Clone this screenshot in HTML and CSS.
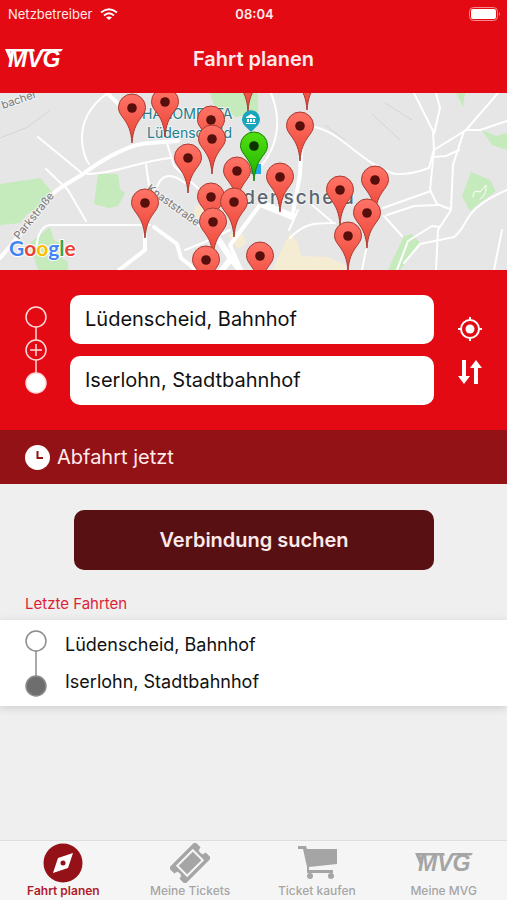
FILE: index.html
```html
<!DOCTYPE html>
<html lang="de">
<head>
<meta charset="utf-8">
<meta name="viewport" content="width=device-width, initial-scale=1">
<title>Fahrt planen</title>
<link rel="stylesheet" href="styles.css">
</head>
<body>
<svg class="defs" width="0" height="0" aria-hidden="true">
  <defs>
    <linearGradient id="red" x1="0" y1="0" x2="0" y2="1"><stop offset="0" stop-color="#ff7467"/><stop offset="1" stop-color="#ea4335"/></linearGradient>
    <linearGradient id="green" x1="0" y1="0" x2="0" y2="1"><stop offset="0" stop-color="#50e010"/><stop offset="1" stop-color="#1fae00"/></linearGradient>
    <path id="drop" d="M0 35C-1 22-4 17-8 11C-11 7-13.500 4-13.500-.5A13.500 13.500 0 0 1 13.500-.5C13.500 4 11 7 8 11C4 17 1 22 0 35Z"/>
    <g id="pin"><use href="#drop" fill="url(#red)" stroke="#a93a31"/><circle r="4.800" fill="#560f0a"/></g>
    <g id="pin-start"><use href="#drop" fill="url(#green)" stroke="#168000"/><circle r="4.800" fill="#0a3300"/></g>
    <symbol id="mvg" viewBox="0 0 60 20">
      <path d="M1 0H30L31 2.500H6L9 8L7 14ZM38 0H59L57 2.500H37Z" fill="currentColor"/>
      <text x="4" y="18" class="logo-text">MVG</text>
    </symbol>
  </defs>
</svg>
<div class="app">
  <header class="top">
    <div class="status">
      <span class="carrier">Netzbetreiber
        <svg width="18" height="13" viewBox="0 0 18 13" fill="none" stroke="#fff" stroke-width="2"><path d="M1 4.500Q9-2 17 4.500M4 7.500Q9 3 14 7.500"/><path d="M9 12L6 9.500Q9 7.500 12 9.500Z" fill="#fff" stroke="none"/></svg>
      </span>
      <strong class="time">08:04</strong>
      <svg class="battery" width="32" height="14" viewBox="0 0 32 14"><rect x=".5" y=".5" width="28" height="13" rx="4" fill="none" stroke="#f58c90"/><rect x="2" y="2" width="25" height="10" rx="2" fill="#fff"/><path d="M30 5Q32 7 30 9Z" fill="#f58c90"/></svg>
    </div>
    <div class="title-row">
      <svg class="logo" width="60" height="20" role="img" aria-label="MVG"><use href="#mvg"/></svg>
      <h1>Fahrt planen</h1>
    </div>
  </header>

  <svg class="map" viewBox="0 93 507 177" preserveAspectRatio="xMidYMid slice" role="img" aria-label="Karte">
    <rect y="93" width="507" height="177" fill="#e6e6e6"/>
    <g fill="#c5eabb">
      <path d="M0 184L40 178L53 193L44 207L28 213L20 223L0 225Z"/>
      <path d="M98 174H118L120 189L125 193L118 206L109 208L94 204Z"/>
      <path d="M30 243L50 227L54 240L60 243L57 255L68 262V270H38Z"/>
      <path d="M210 93H258V112L236 117L214 105Z"/>
      <path d="M456 93H465L463 107Z"/>
      <path d="M482 130L496 136L507 133V150L492 145Z"/>
      <path d="M471 172L490 180L496 191L480 203L470 211L462 196Z"/>
      <path d="M404 236L412 234L420 243L410 256L400 270H388Z"/>
    </g>
    <path d="M290 233L298 243L301 256L328 257L346 265V270H272ZM196 205L208 210L204 223L193 215ZM228 235L240 230L247 243L238 249Z" fill="#f5edd3"/>
    <path d="M0 138L28 127L50 110M372 114L400 140M385 103L412 120M325 125L345 140" fill="none" stroke="#d4d4d4"/>
    <g fill="none" stroke="#fff" stroke-linejoin="round" stroke-linecap="round">
      <path stroke-width="2" d="M108 93C90 105 82 122 82 137Q82 154 89 164M38 137L83 174M46 169L68 190L86 221M87 174C115 174 140 161 170 158M36 250Q38 226 50 225H150M146 165L149 185L175 205L202 228M155 193Q162 165 185 183M167 143L174 166L202 192M185 250L205 242L230 230M271 93C282 120 278 145 262 165M314 127C342 132 360 163 395 174Q410 175 429 168L434 149M414 93L433 131L434 150L430 190L437 204L450 209M436 93L440 108L434 134M434 150L466 130L498 93M466 130H480L507 121M434 157L446 156L459 150M464 131L453 165L451 210L438 230L436 270M383 208L431 191M387 215L414 206L437 205M384 216L402 236M397 270L408 241L432 226L440 227M404 263L420 244L454 237C470 225 460 210 507 190M494 270L502 230M290 238C305 222 318 223 335 223M310 203L332 222M366 250L362 270M298 210L289 230"/>
      <path stroke-width="1" d="M473 197Q473 189 480 192L486 185Q487 195 480 199"/>
      <path stroke-width="4" d="M0 258C30 225 44 196 65 185L83 174C100 161 130 143 150 143L178 141M107 93L133 118M154 227L177 244L181 258L196 270M145 235V250L119 270M302 130L300 175L292 218L260 205L230 245L241 270"/>
      <path stroke-width="6" d="M216 236L230 257L240 270M262 203L292 216M230 260L222 270"/>
    </g>
    <g class="map-text">
      <text class="street" transform="translate(3 109) rotate(-19)">bacher</text>
      <text class="street" transform="translate(19 240) rotate(-51)">Parkstraße</text>
      <text class="street" transform="translate(146 190) rotate(36)">Knaststraße</text>
      <text class="poi" x="142" y="119">HANOMENTA</text>
      <text class="poi" x="147" y="138">Lüdenscheid</text>
      <text class="city" x="217" y="204">Lüdenscheid</text>
    </g>
    <path d="M251 132L244 125A9 9 0 1 1 258 125Z" fill="#19a5bb"/>
    <path d="M246 117L251 114L256 117V118H246ZM247 119H249V122H247ZM250 119H252V122H250ZM253 119H255V122H253ZM246 123H256V124H246Z" fill="#fff"/>
    <rect x="251" y="164" width="10" height="10" fill="#21a8e8"/>
    <use href="#pin" x="248" y="76"/><use href="#pin" x="307" y="75"/>
    <use href="#pin" x="165" y="102"/><use href="#pin" x="132" y="108"/>
    <use href="#pin" x="211" y="120"/><use href="#pin" x="300" y="126"/>
    <use href="#pin" x="212" y="139"/><use href="#pin" x="188" y="158"/>
    <use href="#pin" x="237" y="171"/><use href="#pin-start" x="254" y="146"/>
    <use href="#pin" x="280" y="177"/><use href="#pin" x="375" y="180"/>
    <use href="#pin" x="340" y="190"/><use href="#pin" x="211" y="197"/>
    <use href="#pin" x="234" y="202"/><use href="#pin" x="145" y="203"/>
    <use href="#pin" x="367" y="213"/><use href="#pin" x="213" y="222"/>
    <use href="#pin" x="348" y="236"/><use href="#pin" x="260" y="256"/>
    <use href="#pin" x="206" y="260"/>
    <text class="google" x="9" y="256"><tspan fill="#4285f4">G</tspan><tspan fill="#ea4335">o</tspan><tspan fill="#fbbc05">o</tspan><tspan fill="#4285f4">g</tspan><tspan fill="#34a853">l</tspan><tspan fill="#ea4335">e</tspan></text>
  </svg>

  <main>
    <form id="trip" class="form">
      <svg class="rail" width="22" height="88" viewBox="0 0 22 88" fill="none" stroke="#ffdada" stroke-width="1.500" aria-hidden="true"><circle cx="11" cy="11" r="10"/><path d="M11 21V34M11 54V67M5 44H17M11 38V50"/><circle cx="11" cy="44" r="10"/><circle cx="11" cy="77" r="10" fill="#fff"/></svg>
      <div class="fields">
        <input type="text" aria-label="Start" value="Lüdenscheid, Bahnhof">
        <input type="text" aria-label="Ziel" value="Iserlohn, Stadtbahnhof">
      </div>
      <div class="tools">
        <button type="button" aria-label="Standort"><svg width="24" height="26" viewBox="0 0 24 26" fill="none" stroke="#fff" stroke-width="2"><circle cx="12" cy="13" r="9"/><circle cx="12" cy="13" r="4.500" fill="#fff" stroke="none"/><path d="M12 1V5M12 21V25M0 13H4M20 13H24"/></svg></button>
        <button type="button" aria-label="Richtung tauschen"><svg width="24" height="26" viewBox="0 0 24 26" fill="#fff"><path d="M4 1H8V17H12L6 25L0 17H4ZM16 25H20V9H24L18 1L12 9H16Z"/></svg></button>
      </div>
    </form>
    <button class="when" type="button">
      <svg width="25" height="25" viewBox="0 0 25 25"><circle cx="12.500" cy="12.500" r="12.500" fill="#fff"/><path d="M12.500 6V13H18" fill="none" stroke="#931216" stroke-width="2"/></svg>
      Abfahrt jetzt
    </button>
    <div class="action"><button class="search" type="submit" form="trip">Verbindung suchen</button></div>
    <h2>Letzte Fahrten</h2>
    <a class="recent" href="#trip">
      <svg width="22" height="68" viewBox="0 0 22 68" fill="none" stroke="#8c8c8c" stroke-width="1.500" aria-hidden="true"><circle cx="11" cy="12" r="10"/><path d="M11 22V47"/><circle cx="11" cy="57" r="10" fill="#6e6e6e"/></svg>
      <span class="stops"><span>Lüdenscheid, Bahnhof</span><span>Iserlohn, Stadtbahnhof</span></span>
    </a>
  </main>

  <nav class="tabs">
    <a class="active" href="#trip"><svg width="40" height="40" viewBox="0 0 40 40"><circle cx="20" cy="20" r="19.500" fill="#941118"/><path d="M30 10L25 25L10 30L15 15Z" fill="#fff"/><circle cx="20" cy="20" r="2.500" fill="#941118"/></svg>Fahrt planen</a>
    <a href="#tickets"><svg width="40" height="40" viewBox="0 0 40 40"><g transform="rotate(-45 20 20)"><path d="M2 9H38V16A4 4 0 0 0 38 24V31H2V24A4 4 0 0 0 2 16Z" fill="#a5a5a5" stroke="#a5a5a5" stroke-linejoin="round"/><rect x="9" y="13" width="22" height="14" fill="none" stroke="#f5f5f5" stroke-width="2"/></g></svg>Meine Tickets</a>
    <a href="#buy"><svg width="40" height="40" viewBox="0 0 40 40" fill="#a5a5a5"><path d="M1 3H9L10 6H40V21L12 24V27H36V30H10V24L6 6H1Z"/><circle cx="13" cy="33" r="3"/><circle cx="34" cy="33" r="3"/></svg>Ticket kaufen</a>
    <a href="#mvg-account"><svg width="60" height="40" viewBox="0 0 60 40" aria-hidden="true"><use href="#mvg" y="10" width="60" height="20"/></svg>Meine MVG</a>
  </nav>
</div>
</body>
</html>
```
FILE: styles.css
```css
* { box-sizing: border-box; }
body { margin: 0; font-family: Inter, "Liberation Sans", sans-serif; background: #eeefee; color: #111; }
button, input { font: inherit; border: 0; margin: 0; padding: 0; }
button { background: none; cursor: pointer; }
a { color: inherit; text-decoration: none; }
svg { display: block; flex: none; }
.defs { position: absolute; }
.app { min-height: 100vh; display: flex; flex-direction: column; }
.top { background: #e30a14; color: #ffeaea; padding-bottom: 12px; }
.status, .title-row { display: grid; grid-template-columns: 1fr auto 1fr; align-items: center; }
.status { height: 28px; padding: 0 6px 0 8px; font-size: 13px; }
.carrier { display: flex; align-items: center; gap: 8px; }
.time { font-weight: 600; }
.battery { justify-self: end; }
.title-row { height: 53px; padding: 8px 4px 0; }
.logo { color: #fff; }
.logo-text { font: italic bold 23px "Liberation Sans", sans-serif; fill: currentColor; }
h1 { margin: 0; font-size: 20px; font-weight: 600; line-height: 24px; }
.map { width: 100%; height: 177px; }
.street { font-size: 11px; fill: #777; }
.poi { font-size: 14px; fill: #23808e; }
.city { font-size: 19px; font-weight: 500; letter-spacing: 2px; fill: #5b6670; }
.map-text text { stroke: #f2f2f2; stroke-width: 2px; paint-order: stroke; }
.google { font: 21px Lato, sans-serif; font-weight: 700; stroke: #fff; stroke-width: 2px; paint-order: stroke; }
.form { background: #e30a14; display: flex; align-items: center; padding: 24px 25px; height: 160px; }
.fields { flex: 1; min-width: 0; margin: 0 24px 0 23px; display: grid; gap: 12px; }
.fields input { width: 100%; height: 49px; border-radius: 10px; background: #fff; color: #111; padding: 0 15px 2px; font-size: 20px; }
.tools { display: grid; gap: 17px; }
.when { width: 100%; height: 54px; display: flex; align-items: center; gap: 7px; padding: 0 25px; background: #931216; color: #ffeaea; font-size: 20px; }
.action { padding: 26px 73px 24px 74px; }
.search { width: 100%; height: 60px; border-radius: 10px; background: #591012; color: #fbeaea; font-size: 20px; font-weight: 600; }
h2 { margin: 0; padding: 0 25px 6px; font-size: 15px; line-height: 20px; font-weight: 400; color: #dc1f36; }
.recent { display: flex; align-items: center; gap: 18px; height: 86px; padding: 0 25px; background: #fff; box-shadow: 0 2px 8px #ccc; font-size: 18px; }
.stops { display: grid; gap: 13px; line-height: 24px; }
.tabs { margin-top: auto; height: 60px; display: grid; grid-template-columns: repeat(4, 1fr); background: #f5f5f5; border-top: 1px solid #dedede; color: #a5a5a5; font-size: 12px; font-weight: 500; line-height: 16px; }
.tabs a { display: flex; flex-direction: column; align-items: center; padding-top: 2px; }
.tabs .active { color: #b01c28; font-weight: 600; }
```
